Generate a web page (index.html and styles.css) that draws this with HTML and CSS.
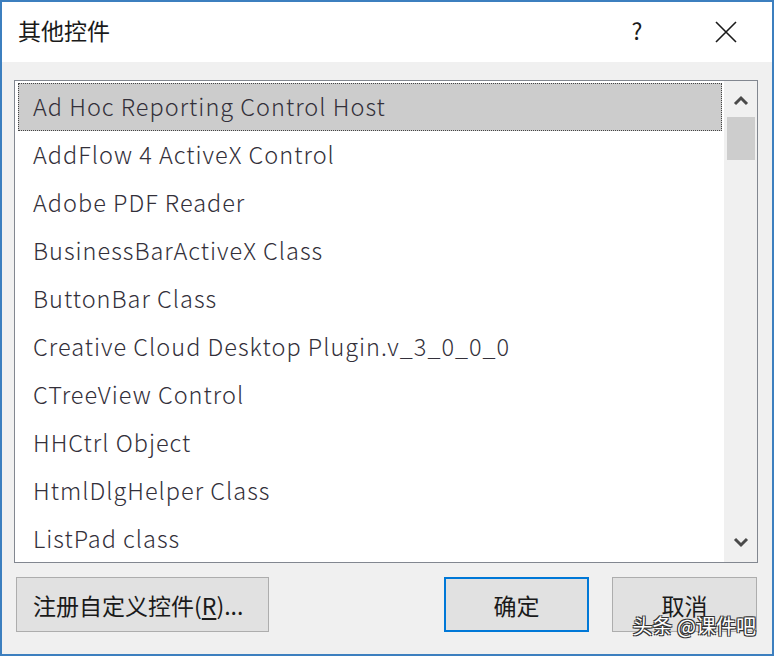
FILE: index.html
```html
<!DOCTYPE html>
<html lang="zh-CN">

<head>
    <meta charset="UTF-8">
    <title>其他控件</title>
    <link rel="stylesheet" href="styles.css">
</head>

<body>
    <div class="dialog">
        <!-- Title bar -->
        <div class="titlebar">
            <span class="title">其他控件</span>
            <span class="help">?</span>
            <span class="close">
                <svg width="22" height="22" viewBox="0 0 22 22">
                    <path d="M1 1 L21 21 M21 1 L1 21" stroke="#1a1a1a" stroke-width="1.6" fill="none" />
                </svg>
            </span>
        </div>

        <!-- Dialog body -->
        <div class="body">
            <div class="listbox">
                <ul class="items">
                    <li class="selected">Ad Hoc Reporting Control Host</li>
                    <li>AddFlow 4 ActiveX Control</li>
                    <li>Adobe PDF Reader</li>
                    <li>BusinessBarActiveX Class</li>
                    <li>ButtonBar Class</li>
                    <li>Creative Cloud Desktop Plugin.v_3_0_0_0</li>
                    <li>CTreeView Control</li>
                    <li>HHCtrl Object</li>
                    <li>HtmlDlgHelper Class</li>
                    <li>ListPad class</li>
                </ul>
                <div class="scrollbar">
                    <svg class="arrow" width="16" height="12" viewBox="0 0 16 12">
                        <path d="M2 9 L8 3 L14 9" stroke="#4a4a4a" stroke-width="3" fill="none" />
                    </svg>
                    <div class="thumb"></div>
                    <div class="track"></div>
                    <svg class="arrow" width="16" height="12" viewBox="0 0 16 12">
                        <path d="M2 3 L8 9 L14 3" stroke="#4a4a4a" stroke-width="3" fill="none" />
                    </svg>
                </div>
            </div>

            <div class="buttons">
                <button class="btn btn-register">注册自定义控件(<u>R</u>)...</button>
                <span class="spacer"></span>
                <button class="btn btn-ok">确定</button>
                <button class="btn btn-cancel">取消</button>
            </div>
        </div>

        <div class="watermark">头条 @课件吧</div>
    </div>
</body>

</html>
```

FILE: styles.css
```css
/* Base */
html, body {
    margin: 0;
    padding: 0;
    background: #f0f0f0;
    font-family: "Noto Sans CJK SC", "Noto Sans", sans-serif;
    color: #1a1a1a;
}

.dialog {
    position: relative;
    width: 774px;
    height: 656px;
    box-sizing: border-box;
    border: 2px solid #3c7fbf;
    display: flex;
    flex-direction: column;
    overflow: hidden;
}

/* Title bar */
.titlebar {
    height: 60px;
    box-sizing: border-box;
    padding: 0 0 4px 16px;
    background: #ffffff;
    display: flex;
    align-items: center;
}

.title {
    font-size: 23px;
    flex: 1;
}

.help {
    font-size: 23px;
    width: 40px;
    text-align: center;
    margin-right: 41px;
}

.close {
    width: 56px;
    display: flex;
    justify-content: center;
    margin-right: 18px;
    padding-top: 4px;
}

/* Body */
.body {
    flex: 1;
    padding: 18px 14px 0 12px;
    display: flex;
    flex-direction: column;
}

.listbox {
    height: 483px;
    box-sizing: border-box;
    border: 1px solid #828790;
    background: #ffffff;
    display: flex;
    padding: 2px 0 2px 3px;
}

.items {
    list-style: none;
    margin: 0;
    padding: 0;
    flex: 1;
    margin-right: 2px;
}

.items li {
    height: 48px;
    line-height: 44px;
    box-sizing: border-box;
    border: 1px solid transparent;
    padding-left: 14px;
    font-size: 23.5px;
    font-weight: 300;
    letter-spacing: 1px;
    color: #33303a;
    white-space: nowrap;
}

.items li.selected {
    background: #cccccc;
    border: 1px dotted #444;
}

.scrollbar {
    width: 33px;
    background: #f0f0f0;
    display: flex;
    flex-direction: column;
    align-items: center;
    margin-top: -2px;
    margin-bottom: -2px;
}

.arrow {
    margin: 14px 0 10px;
}

.arrow:last-child {
    margin: 10px 0 14px;
}

.thumb {
    width: 28px;
    height: 43px;
    background: #cdcdcd;
}

.track {
    flex: 1;
}

/* Buttons */
.buttons {
    display: flex;
    margin-top: 14px;
    padding-left: 2px;
}

.spacer {
    flex: 1;
}

.btn {
    height: 55px;
    box-sizing: border-box;
    background: #e1e1e1;
    border: 1px solid #adadad;
    font-family: inherit;
    font-size: 23px;
    color: #1a1a1a;
    padding: 0;
}

.btn u {
    text-underline-offset: 3px;
}

.btn-register {
    width: 253px;
    text-align: left;
    padding-left: 16px;
}

.btn-ok {
    width: 145px;
    border: 2px solid #0078d7;
    margin-right: 23px;
}

.btn-cancel {
    width: 145px;
    margin-right: 1px;
}

/* Watermark overlay */
.watermark {
    position: absolute;
    right: 16px;
    bottom: 14px;
    font-size: 20px;
    color: #ffffff;
    text-shadow: -1px -1px 0 #333, 1px -1px 0 #333, -1px 1px 0 #333, 1px 1px 0 #333;
}
```
